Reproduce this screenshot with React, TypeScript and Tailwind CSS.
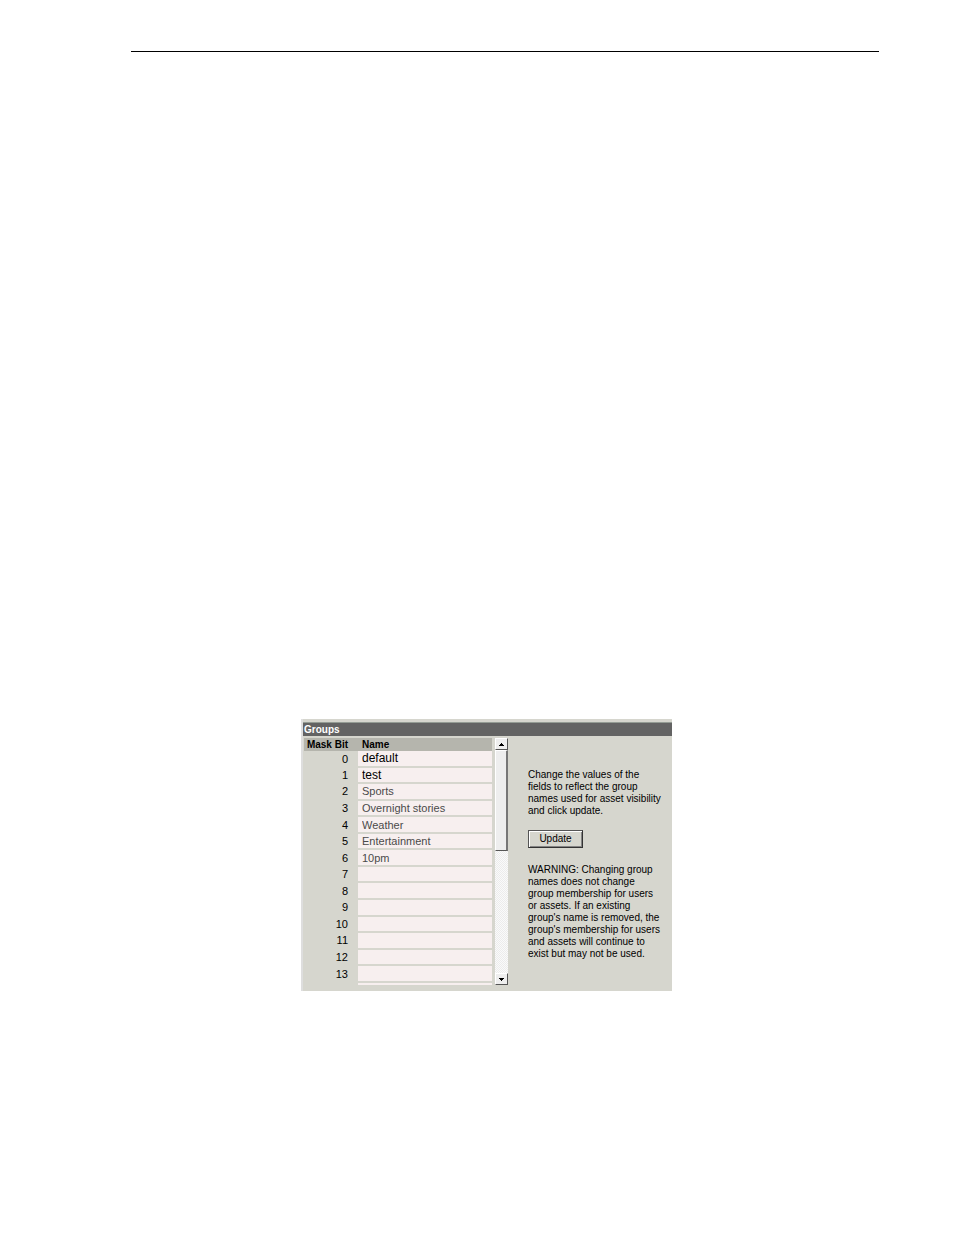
import { useState } from "react";

const initialNames = [
  "default",
  "test",
  "Sports",
  "Overnight stories",
  "Weather",
  "Entertainment",
  "10pm",
  "",
  "",
  "",
  "",
  "",
  "",
  "",
];

function ScrollButton({ direction }: { direction: "up" | "down" }) {
  return (
    <button
      type="button"
      aria-label={direction === "up" ? "Scroll up" : "Scroll down"}
      className="flex h-3 w-full shrink-0 items-center justify-center border border-t-white border-r-[#555555] border-b-[#555555] border-l-white bg-[#eeeeee]"
    >
      <svg width="5" height="3" viewBox="0 0 5 3" fill="#000000" shapeRendering="crispEdges" aria-hidden="true">
        {direction === "up" ? <path d="M2 0h1v1h1v1h1v1H0V2h1V1h1z" /> : <path d="M0 0h5v1H4v1H3v1H2V2H1V1H0z" />}
      </svg>
    </button>
  );
}

function Scrollbar() {
  return (
    <div className="flex w-[13px] shrink-0 flex-col bg-[#f5f5f5] bg-[conic-gradient(#ececec_25%,#fafafa_0_50%,#ececec_0_75%,#fafafa_0)] bg-[length:2px_2px]">
      <ScrollButton direction="up" />
      <div className="h-[101px] border-t border-r-2 border-b border-l border-t-white border-r-[#777777] border-b-[#555555] border-l-white bg-[#eeeeee]" />
      <div className="flex-1" />
      <ScrollButton direction="down" />
    </div>
  );
}

function GroupTable() {
  const [names, setNames] = useState(initialNames);
  return (
    <div className="h-[247px] w-[188px] shrink-0 overflow-hidden">
      <table className="h-[245px] w-full table-fixed border-collapse">
        <thead>
          <tr className="h-[13px] bg-[#b5b5ad] text-[10px] leading-[13px]">
            <th className="w-[54px] p-0 pr-[10px] text-right font-bold whitespace-nowrap">Mask Bit</th>
            <th className="p-0 pl-1 text-left font-bold">Name</th>
          </tr>
        </thead>
        <tbody>
          {names.map((name, bit) => (
            <tr key={bit}>
              <td className="p-0 pr-[10px] text-right text-[11px] leading-[14px]">
                <label htmlFor={`group-${bit}`}>{bit}</label>
              </td>
              <td className="border-b-2 border-[#d6d6ce] bg-[#f7efef] p-0">
                <input
                  id={`group-${bit}`}
                  value={name}
                  onChange={(e) => setNames(names.map((n, i) => (i === bit ? e.target.value : n)))}
                  className={`block h-[14px] w-full bg-transparent pl-1 leading-[14px] outline-none ${
                    bit < 2 ? "text-xs text-black" : "text-[11px] text-[#4a4a4a]"
                  }`}
                />
              </td>
            </tr>
          ))}
        </tbody>
      </table>
      <div className="ml-[54px] h-[2px] bg-[#f7efef]" />
    </div>
  );
}

export default function App() {
  return (
    <main className="min-h-screen bg-white pt-[51px] pr-[75px] pb-10 pl-[131px] font-['Liberation_Sans',Arial,sans-serif] text-black">
      <hr className="border-t border-black" />
      <section
        aria-labelledby="groups-title"
        className="mt-[667px] ml-[170px] w-[371px] border-l-2 border-[#dedede] bg-[#d6d6ce] pt-[3px] pb-[6px]"
      >
        <h1
          id="groups-title"
          className="border-t border-[#949c94] bg-[#636363] pl-[1px] text-[10px] leading-[13px] font-bold text-white"
        >
          Groups
        </h1>
        <div className="flex pt-[2px] pl-[1px]">
          <GroupTable />
          <div className="w-[3px] shrink-0" />
          <Scrollbar />
          <div className="pt-[31px] pl-5 text-[10px] leading-3 whitespace-nowrap">
            <p>
              Change the values of the
              <br />
              fields to reflect the group
              <br />
              names used for asset visibility
              <br />
              and click update.
            </p>
            <button
              type="button"
              className="mt-[13px] mb-4 block h-[18px] w-[55px] border border-t-[#555555] border-r-[#333333] border-b-[#333333] border-l-[#555555] bg-[#d6d6ce] leading-4 shadow-[inset_1px_1px_#ffffff,inset_-1px_-1px_#848484]"
            >
              Update
            </button>
            <p>
              WARNING: Changing group
              <br />
              names does not change
              <br />
              group membership for users
              <br />
              or assets. If an existing
              <br />
              group's name is removed, the
              <br />
              group's membership for users
              <br />
              and assets will continue to
              <br />
              exist but may not be used.
            </p>
          </div>
        </div>
      </section>
    </main>
  );
}
